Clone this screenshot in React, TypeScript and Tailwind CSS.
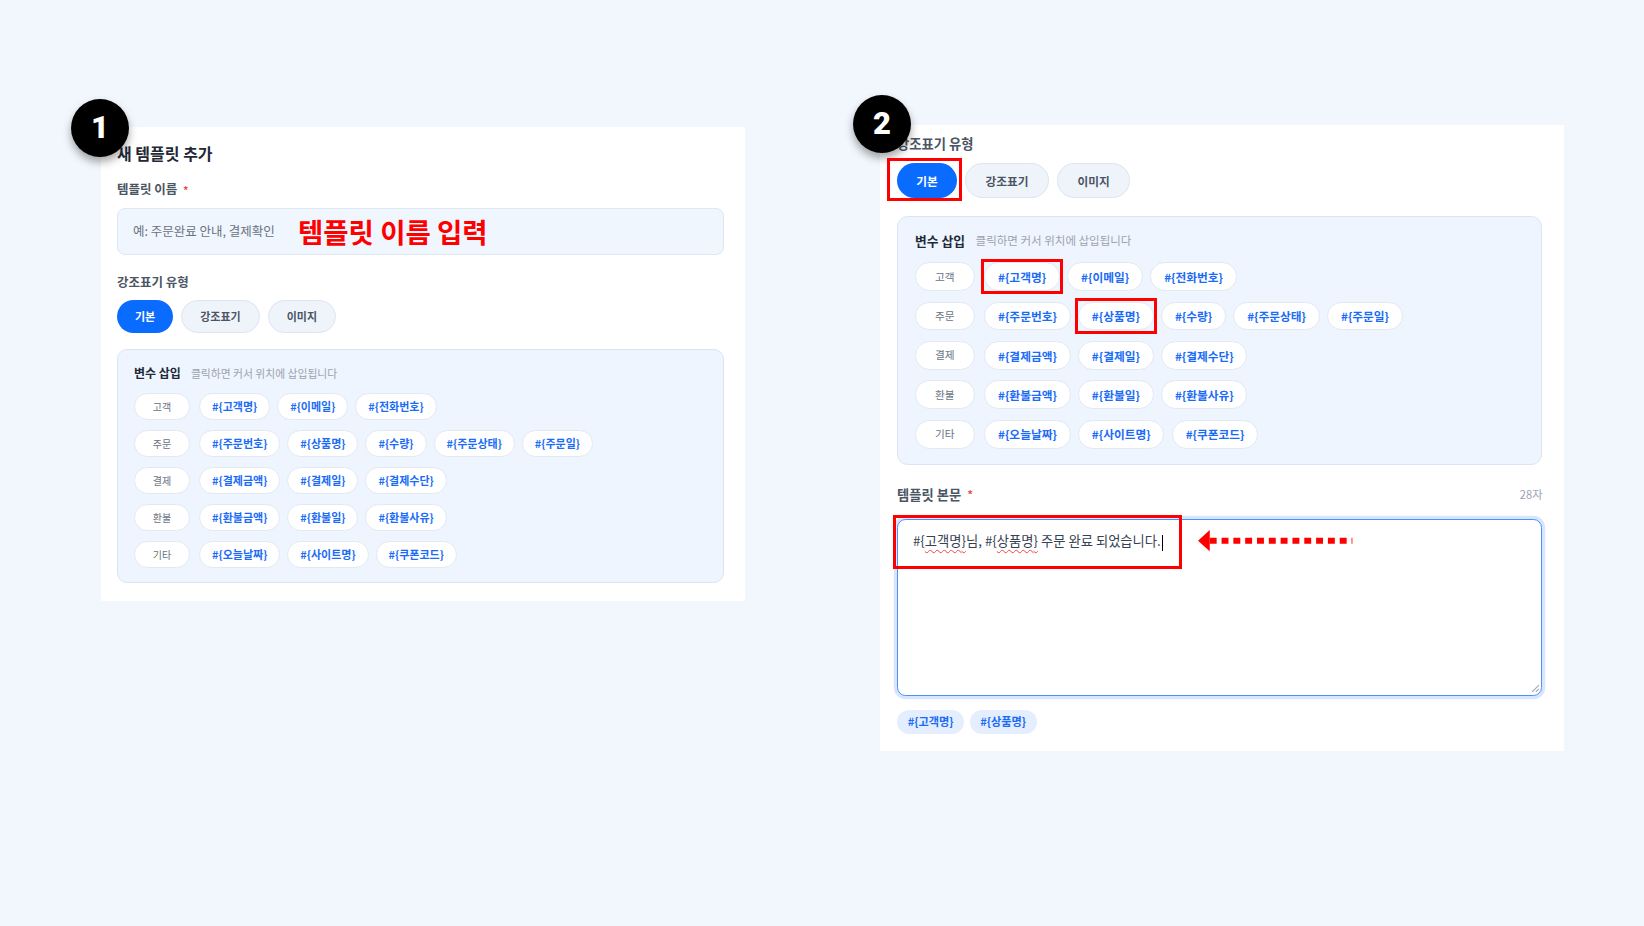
import React from 'react'

// ---------------------------------------------------------------------------
// Data
// ---------------------------------------------------------------------------

const groups = [
  { label: '고객', vars: ['고객명', '이메일', '전화번호'] },
  { label: '주문', vars: ['주문번호', '상품명', '수량', '주문상태', '주문일'] },
  { label: '결제', vars: ['결제금액', '결제일', '결제수단'] },
  { label: '환불', vars: ['환불금액', '환불일', '환불사유'] },
  { label: '기타', vars: ['오늘날짜', '사이트명', '쿠폰코드'] },
]

const types = ['기본', '강조표기', '이미지']

// ---------------------------------------------------------------------------
// Small pieces
// ---------------------------------------------------------------------------

function Badge({ n, className }: { n: number; className: string }) {
  return (
    <div
      className={`absolute z-10 flex h-[58px] w-[58px] items-center justify-center rounded-full bg-black font-['Roboto',sans-serif] text-[31px] font-black text-white shadow-[0_5px_9px_rgba(0,0,0,0.35)] ${className}`}
    >
      {n}
    </div>
  )
}

function RedBox({ className }: { className: string }) {
  return <span className={`pointer-events-none absolute z-10 border-[3.3px] border-[#ff0000] ${className}`} />
}

function FieldLabel({ text, required }: { text: string; required?: boolean }) {
  return (
    <div className="flex h-[20px] items-center text-[12.5px] font-semibold text-[#4b5563]">
      {text}
      {required && <span className="ml-[6px] text-[10px] text-[#ef4444]">*</span>}
    </div>
  )
}

function TypeButtons({ marked }: { marked?: boolean }) {
  return (
    <div className="mt-[8px] flex gap-[8px]">
      {types.map((t, i) =>
        i === 0 ? (
          <div key={t} className="relative">
            <button className="h-[33px] rounded-full bg-[#0a6bff] px-[18px] text-[11px] font-bold text-white">
              {t}
            </button>
            {marked && <RedBox className="-left-[9px] -top-[5px] h-[40px] w-[70px]" />}
          </div>
        ) : (
          <button
            key={t}
            className="h-[33px] rounded-full border border-[#dde5f0] bg-[#eff4fb] px-[18px] text-[11px] font-semibold text-[#4b5563]"
          >
            {t}
          </button>
        ),
      )}
    </div>
  )
}

function VarTag({ name, marked }: { name: string; marked?: boolean }) {
  return (
    <div className="relative">
      <span className="flex h-[27px] items-center rounded-full border border-[#e2e9f3] bg-white px-[12px] text-[11px] font-semibold text-[#1a6cf7]">
        {'#{' + name + '}'}
      </span>
      {marked && <RedBox className="-inset-[3px]" />}
    </div>
  )
}

function VarBox({ marks = [] }: { marks?: string[] }) {
  return (
    <div className="mt-[16px] h-[234px] rounded-[10px] border border-[#dbe5f2] bg-[#eef5fe] px-[16px] pt-[13px]">
      <div className="flex h-[20px] items-center gap-[10px]">
        <span className="text-[12px] font-bold text-[#1f2937]">변수 삽입</span>
        <span className="text-[10.8px] text-[#9ca3af]">클릭하면 커서 위치에 삽입됩니다</span>
      </div>
      <div className="mt-[10px] flex flex-col gap-[10px]">
        {groups.map((g) => (
          <div key={g.label} className="flex items-center gap-[9px]">
            <span className="flex h-[27px] w-[56px] items-center justify-center rounded-full border border-[#e3e9f1] bg-white text-[10px] text-[#6b7280]">
              {g.label}
            </span>
            <div className="flex gap-[7px]">
              {g.vars.map((v) => (
                <VarTag key={v} name={v} marked={marks.includes(v)} />
              ))}
            </div>
          </div>
        ))}
      </div>
    </div>
  )
}

// ---------------------------------------------------------------------------
// Panels
// ---------------------------------------------------------------------------

function NewTemplatePanel() {
  return (
    <div className="w-[644px] bg-white pb-[18px] pl-[16px] pr-[21px] pt-[14px]">
      <h2 className="h-[24px] text-[16px] leading-[24px] font-bold text-[#1f2937]">새 템플릿 추가</h2>

      <div className="mt-[14px]">
        <FieldLabel text="템플릿 이름" required />
      </div>
      <div className="relative mt-[9px] flex h-[47px] items-center rounded-[8px] border border-[#dfe7f2] bg-[#f0f6fe] pl-[15px]">
        <span className="text-[12.5px] text-[#6b7280]">예: 주문완료 안내, 결제확인</span>
        <span className="absolute left-[180px] top-1/2 -translate-y-1/2 text-[27.5px] font-bold text-[#ff0000]">
          템플릿 이름 입력
        </span>
      </div>

      <div className="mt-[17px]">
        <FieldLabel text="강조표기 유형" />
      </div>
      <TypeButtons />
      <VarBox />
    </div>
  )
}

function BodyPanel() {
  return (
    <div className="w-[642px] bg-white pb-[16px] pl-[16px] pr-[20px] pt-[8px] [zoom:1.065]">
      <FieldLabel text="강조표기 유형" />
      <TypeButtons marked />
      <VarBox marks={['고객명', '상품명']} />

      <div className="mt-[18px] flex items-center justify-between">
        <FieldLabel text="템플릿 본문" required />
        <span className="text-[10.5px] text-[#9ca3af]">28자</span>
      </div>

      <div className="relative mt-[13px] h-[166px] rounded-[8px] border-[1.5px] border-[#4f8ff7] bg-white pl-[14px] pt-[10.5px] shadow-[0_0_0_3px_#d7e6fd]">
        <p className="h-[18px] text-[12.5px] leading-[18px] text-[#374151]">
          #{'{'}
          <span className="underline decoration-[#ef4444] decoration-wavy decoration-1 underline-offset-[3px]">
            고객명{'}'}
          </span>
          님, #{'{'}
          <span className="underline decoration-[#ef4444] decoration-wavy decoration-1 underline-offset-[3px]">
            상품명{'}'}
          </span>{' '}
          주문 완료 되었습니다.
          <span className="ml-px inline-block h-[15px] w-px bg-black align-middle" />
        </p>

        <RedBox className="-left-[4.7px] -top-[4.7px] h-[51px] w-[271px]" />

        {/* dashed arrow pointing at the text */}
        <svg className="absolute left-[282px] top-[8.5px]" width="146" height="22" viewBox="0 0 146 22">
          <polygon points="0,11 11,1 11,21" fill="#ff0000" />
          <line x1="11" y1="11" x2="145" y2="11" stroke="#ff0000" strokeWidth="5.5" strokeDasharray="6.5 4.6" />
        </svg>

        {/* resize grip */}
        <svg className="absolute bottom-[2px] right-[2px]" width="8" height="8" viewBox="0 0 8 8">
          <line x1="7.5" y1="1" x2="1" y2="7.5" stroke="#9ca3af" strokeWidth="1" />
          <line x1="7.5" y1="4.5" x2="4.5" y2="7.5" stroke="#9ca3af" strokeWidth="1" />
        </svg>
      </div>

      <div className="mt-[13px] flex gap-[5px]">
        {['고객명', '상품명'].map((v) => (
          <span
            key={v}
            className="flex h-[22.5px] items-center rounded-full bg-[#e4eefe] px-[10px] text-[10.5px] font-bold text-[#1a6cf7]"
          >
            {'#{' + v + '}'}
          </span>
        ))}
      </div>
    </div>
  )
}

// ---------------------------------------------------------------------------
// Page
// ---------------------------------------------------------------------------

export default function App() {
  return (
    <div className="flex h-[926px] w-[1644px] items-start overflow-hidden bg-[#f1f7fd] font-['Noto_Sans_CJK_KR','Noto_Sans',sans-serif]">
      <div className="relative ml-[101px] mt-[127px]">
        <Badge n={1} className="-left-[30px] -top-[28px]" />
        <NewTemplatePanel />
      </div>

      <div className="relative ml-[135px] mt-[125px]">
        <Badge n={2} className="-left-[27px] -top-[30px]" />
        <BodyPanel />
      </div>
    </div>
  )
}
